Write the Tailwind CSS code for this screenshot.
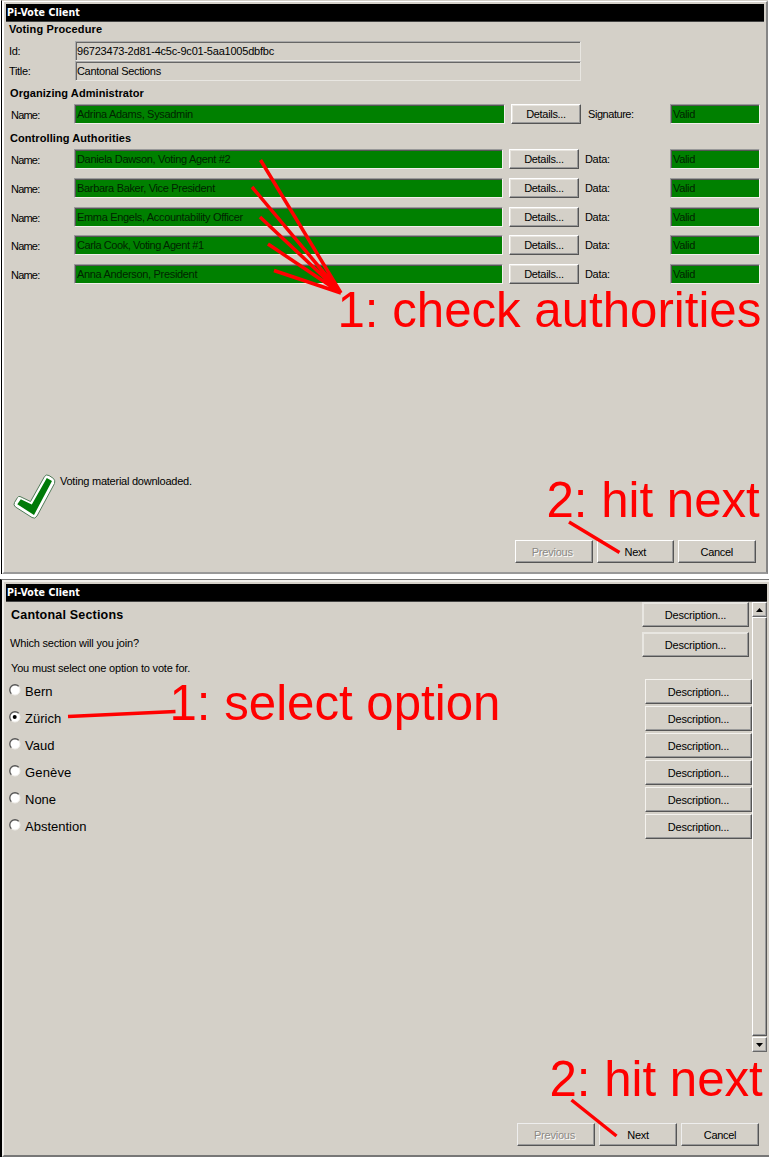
<!DOCTYPE html>
<html lang="en"><head><meta charset="utf-8"><title>Pi-Vote Client</title>
<script src="https://cdn.jsdelivr.net/npm/@tailwindcss/browser@4"></script></head>
<body class="relative w-[769px] h-[1157px] overflow-hidden bg-white font-['Liberation_Sans',sans-serif] text-[11px] leading-[16px] tracking-[-0.32px] text-black whitespace-nowrap">
<div class="flex flex-col gap-[5px] h-full">
<!-- Authority check window -->
<section class="h-[574px] pl-px pr-px shrink-0">
<div class="h-full border-l border-black border-t border-t-[#d4d0c8]">
<div class="h-full bg-[#d4d0c8] border-t border-l-2 border-white border-r-2 border-r-[#858585] border-b-2 border-b-[#999] pl-[2px] pt-[2px] pr-[2px]">
<h1 class="h-[18px] bg-black border-b border-[#444] text-white font-['DejaVu_Sans_Condensed','DejaVu_Sans',sans-serif] font-bold text-[10.5px] leading-[17px] tracking-[0.08px] pl-px">Pi-Vote Client</h1>
<h2 class="h-[19px] pl-[3px] font-bold leading-[15px] tracking-[0.15px]">Voting Procedure</h2>
<div class="flex flex-col">
<div class="flex h-5"><span class="w-[69px] pl-[3px] pt-[2px]">Id:</span><span class="w-[506px] h-5 border border-t-[#aaa] border-l-[#aaa] border-[#e8e6e1] shadow-[inset_1px_1px_#666] pl-px pt-px tracking-[-0.22px]">96723473-2d81-4c5c-9c01-5aa1005dbfbc</span></div>
<div class="flex h-5"><span class="w-[69px] pl-[3px] pt-[2px]">Title:</span><span class="w-[506px] h-5 border border-t-[#aaa] border-l-[#aaa] border-[#e8e6e1] shadow-[inset_1px_1px_#666] pl-px pt-px">Cantonal Sections</span></div>
</div>
<h2 class="h-[23px] pt-1 pl-1 font-bold tracking-[0.07px]">Organizing Administrator</h2>
<div class="flex h-5"><span class="w-[68px] pl-[5px] pt-[3px] tracking-[-0.8px]">Name:</span><span class="w-[431px] bg-[#008000] border border-[#f2f0ec] border-t-[#999] border-l-[#999] shadow-[inset_1px_1px_#555] pl-[2px] pt-px text-[#002400]">Adrina Adams, Sysadmin</span><span class="ml-[6px] w-[70px] border border-[#555] border-t-white border-l-white shadow-[inset_-1px_-1px_#999,inset_1px_1px_#e8e5df] text-center pt-px">Details...</span><span class="w-[89px] pl-[7px] pt-[2px] tracking-[-0.45px]">Signature:</span><span class="w-[90px] bg-[#008000] border border-[#f2f0ec] border-t-[#999] border-l-[#999] shadow-[inset_1px_1px_#555] pl-[2px] pt-px text-[#002400]">Valid</span></div>
<h2 class="h-[25px] pt-[6px] pl-1 font-bold tracking-[0.08px]">Controlling Authorities</h2>
<div class="flex flex-col gap-[8.75px]">
<div class="flex h-5"><span class="w-[68px] pl-[5px] pt-[3px] tracking-[-0.8px]">Name:</span><span class="w-[429px] bg-[#008000] border border-[#f2f0ec] border-t-[#999] border-l-[#999] shadow-[inset_1px_1px_#555] pl-[2px] pt-px text-[#002400]">Daniela Dawson, Voting Agent #2</span><span class="ml-[6px] w-[70px] border border-[#555] border-t-white border-l-white shadow-[inset_-1px_-1px_#999,inset_1px_1px_#e8e5df] text-center pt-px">Details...</span><span class="w-[91px] pl-[6px] pt-[2px]">Data:</span><span class="w-[90px] bg-[#008000] border border-[#f2f0ec] border-t-[#999] border-l-[#999] shadow-[inset_1px_1px_#555] pl-[2px] pt-px text-[#002400]">Valid</span></div>
<div class="flex h-5"><span class="w-[68px] pl-[5px] pt-[3px] tracking-[-0.8px]">Name:</span><span class="w-[429px] bg-[#008000] border border-[#f2f0ec] border-t-[#999] border-l-[#999] shadow-[inset_1px_1px_#555] pl-[2px] pt-px text-[#002400]">Barbara Baker, Vice President</span><span class="ml-[6px] w-[70px] border border-[#555] border-t-white border-l-white shadow-[inset_-1px_-1px_#999,inset_1px_1px_#e8e5df] text-center pt-px">Details...</span><span class="w-[91px] pl-[6px] pt-[2px]">Data:</span><span class="w-[90px] bg-[#008000] border border-[#f2f0ec] border-t-[#999] border-l-[#999] shadow-[inset_1px_1px_#555] pl-[2px] pt-px text-[#002400]">Valid</span></div>
<div class="flex h-5"><span class="w-[68px] pl-[5px] pt-[3px] tracking-[-0.8px]">Name:</span><span class="w-[429px] bg-[#008000] border border-[#f2f0ec] border-t-[#999] border-l-[#999] shadow-[inset_1px_1px_#555] pl-[2px] pt-px text-[#002400]">Emma Engels, Accountability Officer</span><span class="ml-[6px] w-[70px] border border-[#555] border-t-white border-l-white shadow-[inset_-1px_-1px_#999,inset_1px_1px_#e8e5df] text-center pt-px">Details...</span><span class="w-[91px] pl-[6px] pt-[2px]">Data:</span><span class="w-[90px] bg-[#008000] border border-[#f2f0ec] border-t-[#999] border-l-[#999] shadow-[inset_1px_1px_#555] pl-[2px] pt-px text-[#002400]">Valid</span></div>
<div class="flex h-5"><span class="w-[68px] pl-[5px] pt-[3px] tracking-[-0.8px]">Name:</span><span class="w-[429px] bg-[#008000] border border-[#f2f0ec] border-t-[#999] border-l-[#999] shadow-[inset_1px_1px_#555] pl-[2px] pt-px text-[#002400] tracking-[-0.43px]">Carla Cook, Voting Agent #1</span><span class="ml-[6px] w-[70px] border border-[#555] border-t-white border-l-white shadow-[inset_-1px_-1px_#999,inset_1px_1px_#e8e5df] text-center pt-px">Details...</span><span class="w-[91px] pl-[6px] pt-[2px]">Data:</span><span class="w-[90px] bg-[#008000] border border-[#f2f0ec] border-t-[#999] border-l-[#999] shadow-[inset_1px_1px_#555] pl-[2px] pt-px text-[#002400]">Valid</span></div>
<div class="flex h-5"><span class="w-[68px] pl-[5px] pt-[3px] tracking-[-0.8px]">Name:</span><span class="w-[429px] bg-[#008000] border border-[#f2f0ec] border-t-[#999] border-l-[#999] shadow-[inset_1px_1px_#555] pl-[2px] pt-px text-[#002400]">Anna Anderson, President</span><span class="ml-[6px] w-[70px] border border-[#555] border-t-white border-l-white shadow-[inset_-1px_-1px_#999,inset_1px_1px_#e8e5df] text-center pt-px">Details...</span><span class="w-[91px] pl-[6px] pt-[2px]">Data:</span><span class="w-[90px] bg-[#008000] border border-[#f2f0ec] border-t-[#999] border-l-[#999] shadow-[inset_1px_1px_#555] pl-[2px] pt-px text-[#002400]">Valid</span></div>
</div>
<div class="flex mt-[189px] h-[67px] pl-[7px]">
<svg class="w-[43px] h-[46px] mt-px" viewBox="13 474 43 46"><path d="M20 496.500L30.500 501.500L44.500 476.500Q46 474 49 475.500L53.500 478.500Q55.500 480.500 54.500 483.500L37 516Q35 519.500 32 517.500L15.500 507Q13 505 14.500 502.500L17.500 497.500Q18.500 496 20 496.500Z" fill="#fff" stroke="#507b58" stroke-width="1"/><path d="M20.800 499.200L31.800 504.500L46.800 478L52 481L34 515L17.300 504.300Z" fill="#007a08"/></svg>
<span class="pl-[4px] tracking-[-0.24px]">Voting material downloaded.</span></div>
<div class="flex gap-[4px] pl-[509px] h-[23px]">
<span class="w-[77.500px] border border-[#555] border-t-white border-l-white shadow-[inset_-1px_-1px_#999] text-center pt-[3px] text-[#8b8985] [text-shadow:1px_1px_#fff] tracking-[-0.2px] pr-[3px]">Previous</span><span class="w-[77.500px] border border-[#555] border-t-white border-l-white shadow-[inset_-1px_-1px_#999] text-center pt-[3px]">Next</span><span class="w-[77.500px] border border-[#555] border-t-white border-l-white shadow-[inset_-1px_-1px_#999] text-center pt-[3px]">Cancel</span></div>
</div></div></section>

<!-- Ballot window -->
<section class="h-[578px] shrink-0 border-l-2 border-black border-t border-t-[#777]">
<div class="h-full bg-[#d4d0c8] border-l-2 border-t-2 border-[#f0eeea] border-b-2 border-b-[#777] pl-[2px] pt-[2px]">
<h1 class="h-[18px] w-[761px] bg-black border-b border-[#444] text-white font-['DejaVu_Sans_Condensed','DejaVu_Sans',sans-serif] font-bold text-[10.5px] leading-[17px] tracking-[0.08px] pl-px">Pi-Vote Client</h1>
<div class="flex h-[450px]">
<div class="w-[746px]">
<div class="flex justify-between h-[30px] pr-[3px]"><h2 class="pl-[5px] pt-[5px] font-bold text-[12.5px] tracking-[0.2px]">Cantonal Sections</h2><span class="h-[25px] w-[107px] border border-[#555] border-t-[#e8e6e1] border-l-[#e8e6e1] shadow-[inset_-1px_-1px_#999,inset_1px_1px_#e8e6e1] text-center pt-[4px] tracking-[-0.2px]">Description...</span></div>
<div class="flex justify-between h-[25px] pr-[3px]"><p class="pl-[4px] pt-[3px] tracking-[-0.18px]">Which section will you join?</p><span class="h-[25px] w-[107px] border border-[#555] border-t-[#e8e6e1] border-l-[#e8e6e1] shadow-[inset_-1px_-1px_#999,inset_1px_1px_#e8e6e1] text-center pt-[4px] tracking-[-0.2px]">Description...</span></div>
<p class="h-[22px] pl-[5px] pt-[3px] tracking-[-0.18px]">You must select one option to vote for.</p>
<div class="flex flex-col gap-[2px] text-[13px] tracking-[0px]">
<div class="flex h-[25px]"><svg class="ml-[3px] mt-[5px] w-3 h-3" viewBox="0 0 12 12"><circle cx="6" cy="6" r="5" fill="#fff" stroke="#f0eee9"/><path d="M2.300 9.700A5.200 5.200 0 0 1 9.700 2.300" fill="none" stroke="#555" stroke-width="1.300"/></svg><span class="pl-[4px] pt-[5px]">Bern</span><span class="ml-auto w-[107px] border border-[#555] border-t-[#f4f2ee] border-l-[#f4f2ee] shadow-[inset_-1px_-1px_#999] text-center text-[11px] tracking-[-0.2px] pt-[4px]">Description...</span></div>
<div class="flex h-[25px]"><svg class="ml-[3px] mt-[5px] w-3 h-3" viewBox="0 0 12 12"><circle cx="6" cy="6" r="5" fill="#fff" stroke="#f0eee9"/><path d="M2.300 9.700A5.200 5.200 0 0 1 9.700 2.300" fill="none" stroke="#555" stroke-width="1.300"/><circle cx="5.700" cy="6" r="2" /></svg><span class="pl-[4px] pt-[5px]">Zürich</span><span class="ml-auto w-[107px] border border-[#555] border-t-[#f4f2ee] border-l-[#f4f2ee] shadow-[inset_-1px_-1px_#999] text-center text-[11px] tracking-[-0.2px] pt-[4px]">Description...</span></div>
<div class="flex h-[25px]"><svg class="ml-[3px] mt-[5px] w-3 h-3" viewBox="0 0 12 12"><circle cx="6" cy="6" r="5" fill="#fff" stroke="#f0eee9"/><path d="M2.300 9.700A5.200 5.200 0 0 1 9.700 2.300" fill="none" stroke="#555" stroke-width="1.300"/></svg><span class="pl-[4px] pt-[5px]">Vaud</span><span class="ml-auto w-[107px] border border-[#555] border-t-[#f4f2ee] border-l-[#f4f2ee] shadow-[inset_-1px_-1px_#999] text-center text-[11px] tracking-[-0.2px] pt-[4px]">Description...</span></div>
<div class="flex h-[25px]"><svg class="ml-[3px] mt-[5px] w-3 h-3" viewBox="0 0 12 12"><circle cx="6" cy="6" r="5" fill="#fff" stroke="#f0eee9"/><path d="M2.300 9.700A5.200 5.200 0 0 1 9.700 2.300" fill="none" stroke="#555" stroke-width="1.300"/></svg><span class="pl-[4px] pt-[5px] tracking-[0.15px]">Genève</span><span class="ml-auto w-[107px] border border-[#555] border-t-[#f4f2ee] border-l-[#f4f2ee] shadow-[inset_-1px_-1px_#999] text-center text-[11px] tracking-[-0.2px] pt-[4px]">Description...</span></div>
<div class="flex h-[25px]"><svg class="ml-[3px] mt-[5px] w-3 h-3" viewBox="0 0 12 12"><circle cx="6" cy="6" r="5" fill="#fff" stroke="#f0eee9"/><path d="M2.300 9.700A5.200 5.200 0 0 1 9.700 2.300" fill="none" stroke="#555" stroke-width="1.300"/></svg><span class="pl-[4px] pt-[5px]">None</span><span class="ml-auto w-[107px] border border-[#555] border-t-[#f4f2ee] border-l-[#f4f2ee] shadow-[inset_-1px_-1px_#999] text-center text-[11px] tracking-[-0.2px] pt-[4px]">Description...</span></div>
<div class="flex h-[25px]"><svg class="ml-[3px] mt-[5px] w-3 h-3" viewBox="0 0 12 12"><circle cx="6" cy="6" r="5" fill="#fff" stroke="#f0eee9"/><path d="M2.300 9.700A5.200 5.200 0 0 1 9.700 2.300" fill="none" stroke="#555" stroke-width="1.300"/></svg><span class="pl-[4px] pt-[5px]">Abstention</span><span class="ml-auto w-[107px] border border-[#555] border-t-[#f4f2ee] border-l-[#f4f2ee] shadow-[inset_-1px_-1px_#999] text-center text-[11px] tracking-[-0.2px] pt-[4px]">Description...</span></div>
</div></div>
<div class="w-[15px] flex flex-col">
<span class="h-[15px] border border-[#666] border-t-white border-l-white shadow-[inset_-1px_-1px_#aaa] flex items-center justify-center"><svg class="w-[7px] h-1" viewBox="0 0 7 4"><path d="M0 4L3.500 0L7 4Z"/></svg></span>
<span class="h-[419px] border border-[#555] border-t-white border-l-white shadow-[inset_-1px_-1px_#999]"></span>
<span class="mt-px h-[15px] border border-[#666] border-t-white border-l-white shadow-[inset_-1px_-1px_#aaa] flex items-center justify-center"><svg class="w-[7px] h-1" viewBox="0 0 7 4"><path d="M0 0L3.500 4L7 0Z"/></svg></span>
</div></div>
<div class="flex gap-[4px] pl-[511px] mt-[71px] h-[23px]">
<span class="w-[78px] border border-[#555] border-t-[#eee] border-l-[#eee] shadow-[inset_-1px_-1px_#999] text-center pt-[3px] text-[#8b8985] [text-shadow:1px_1px_#fff] tracking-[-0.2px] pr-[3px]">Previous</span><span class="w-[78px] border border-[#555] border-t-[#eee] border-l-[#eee] shadow-[inset_-1px_-1px_#999] text-center pt-[3px]">Next</span><span class="w-[78px] border border-[#555] border-t-[#eee] border-l-[#eee] shadow-[inset_-1px_-1px_#999] text-center pt-[3px]">Cancel</span></div>
</div></section>
</div>
<!-- Red instructions laid over both windows -->
<svg class="absolute inset-0 w-[769px] h-[1157px] tracking-normal" viewBox="0 0 769 1157"><g stroke="#f00" stroke-width="3.500" fill="none"><path d="M260.500 160L341 293M252 187L341 293M260 217L341 293M268 244L341 293M274 270.500L341 293M569 522L619.500 552.500M68 716.500L175.500 711.500M571.500 1100L616.500 1136"/></g>
<g fill="#f00" font-family="Liberation Sans, sans-serif" font-size="49.200"><text x="337.500" y="327">1: check authorities</text><text x="546.500" y="517">2: hit next</text><text x="169.500" y="720">1: select option</text><text x="549.500" y="1096">2: hit next</text></g></svg>
</body></html>
